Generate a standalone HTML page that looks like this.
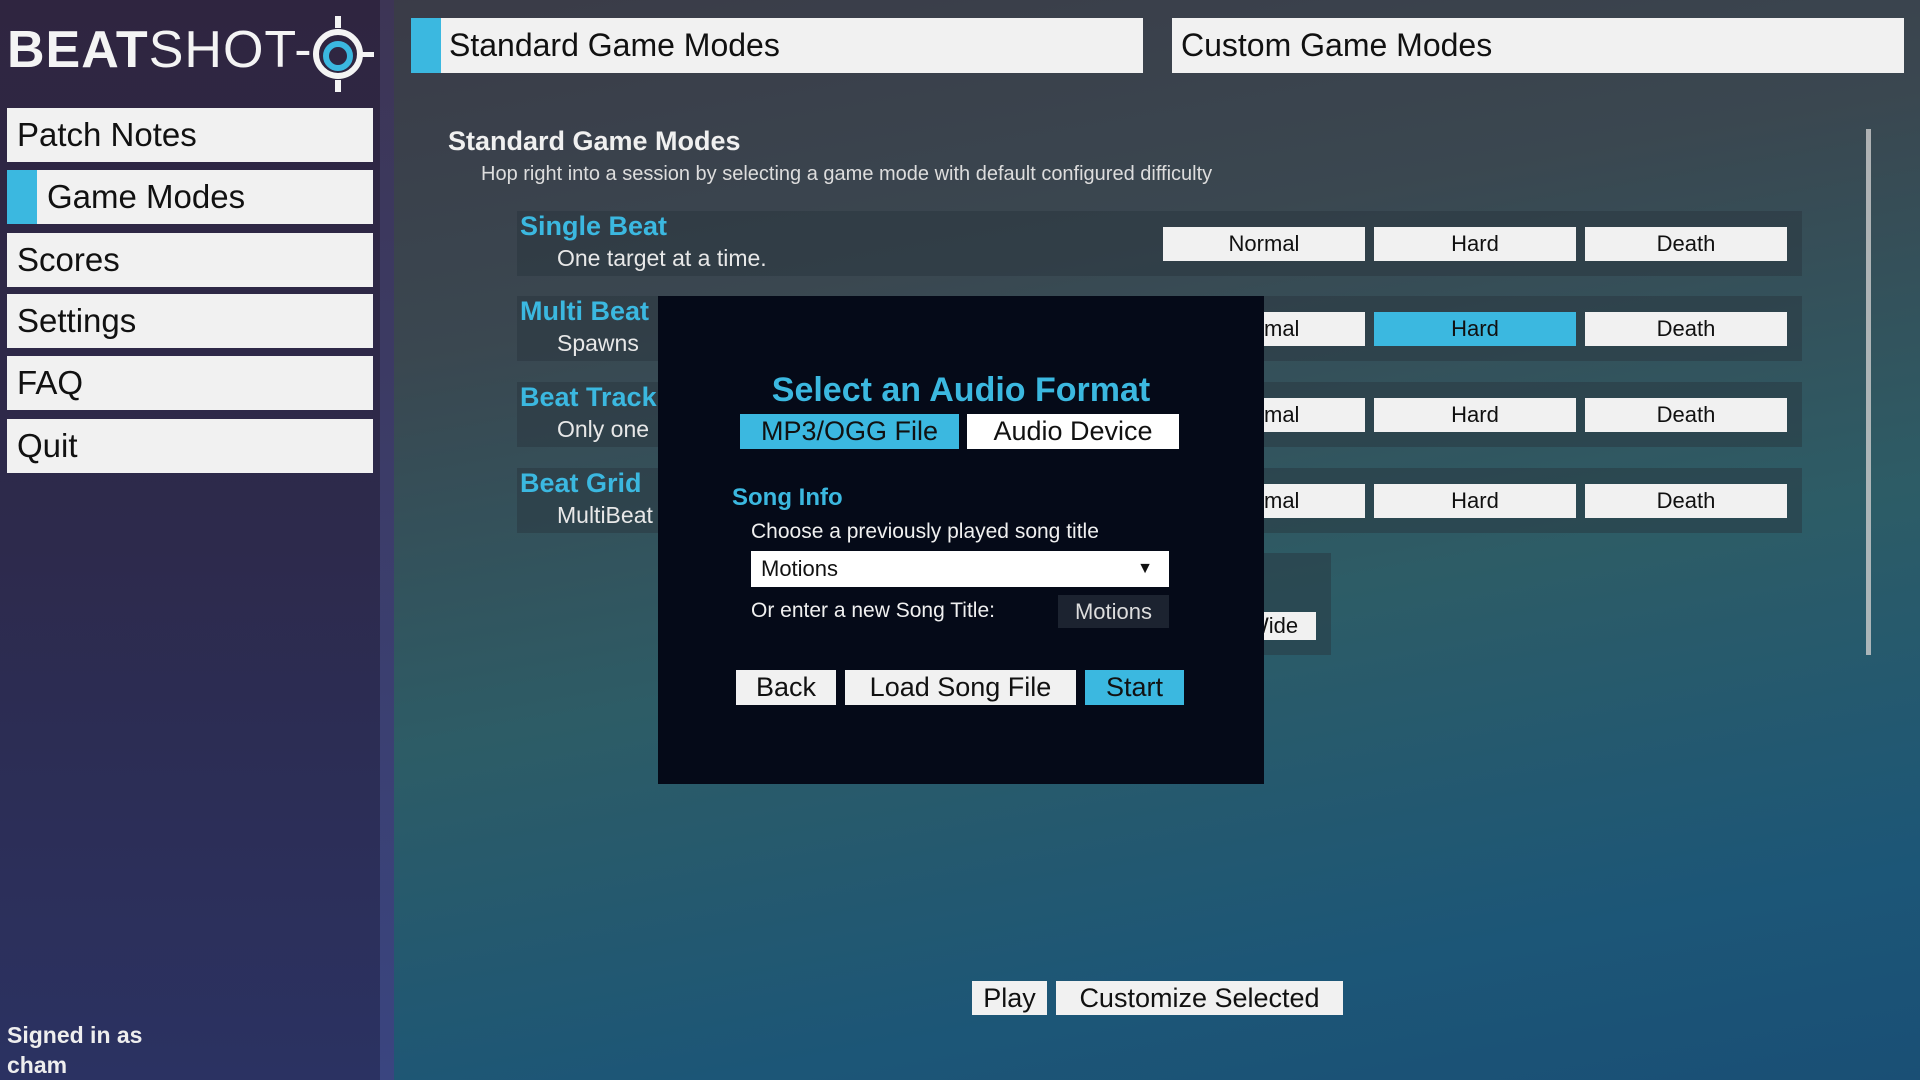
<!DOCTYPE html>
<html><head><meta charset="utf-8"><style>
*{margin:0;padding:0;box-sizing:border-box}
body{width:1920px;height:1080px;overflow:hidden;position:relative;font-family:"Liberation Sans",sans-serif;
background:linear-gradient(170deg,#3a3946 0%,#3a4750 30%,#2d5c66 58%,#1c5677 85%,#1a4f75 100%)}
.a{position:absolute}
.side{left:0;top:0;width:380px;height:1080px;background:linear-gradient(180deg,#2f2540 0%,#2d2a4c 50%,#2b3262 100%)}
.div{left:380px;top:0;width:14px;height:1080px;background:linear-gradient(180deg,#3d3555,#3a4580)}
.mb{left:7px;width:366px;height:54px;background:#f1f1f1;color:#111;font-size:33px;line-height:54px;padding-left:10px}
.tab{top:18px;height:55px;background:#f1f1f1;color:#111;font-size:32px;line-height:55px;padding-left:9px}
.row{left:517px;width:1285px;height:65px;background:rgba(40,50,60,.45)}
.tt{color:#3bb8e0;font-weight:bold;font-size:27px;left:520px}
.st{color:#e8e8e8;font-size:23px;left:557px}
.b{background:#f1f1f1;color:#111;font-size:22px;text-align:center;height:34px;line-height:34px;width:202px}
.m{left:658px;top:296px;width:606px;height:488px;background:#050a18}
.mbt{height:35px;line-height:35px;text-align:center;font-size:27px;color:#111;background:#f1f1f1}
.bl{background:#3bb8e0 !important}
</style></head><body>
<div class="a side"></div><div class="a div"></div>
<div class="a" style="left:7px;top:22px;font-size:52px;color:#f4f4f4;letter-spacing:1px;line-height:56px"><b>BEAT</b>SHOT-</div>
<svg class="a" style="left:300px;top:14px" width="80" height="80" viewBox="0 0 80 80"><circle cx="38" cy="40" r="22" fill="none" stroke="#f4f4f4" stroke-width="6"/><circle cx="38" cy="42" r="12" fill="none" stroke="#3bb8e0" stroke-width="6"/><rect x="35" y="2" width="6" height="12" fill="#f4f4f4"/><rect x="35" y="66" width="6" height="12" fill="#f4f4f4"/><rect x="62" y="38" width="12" height="5" fill="#f4f4f4"/></svg>
<div class="a mb" style="top:108px">Patch Notes</div>
<div class="a mb" style="top:170px;padding-left:40px">Game Modes</div>
<div class="a" style="left:7px;top:170px;width:30px;height:54px;background:#3bb8e0"></div>
<div class="a mb" style="top:233px">Scores</div>
<div class="a mb" style="top:294px">Settings</div>
<div class="a mb" style="top:356px">FAQ</div>
<div class="a mb" style="top:419px">Quit</div>
<div class="a" style="left:7px;top:1020px;color:#eee;font-size:23px;line-height:30px;font-weight:bold">Signed in as<br>cham</div>

<div class="a tab" style="left:411px;width:732px;padding-left:38px">Standard Game Modes</div>
<div class="a" style="left:411px;top:18px;width:30px;height:55px;background:#3bb8e0"></div>
<div class="a tab" style="left:1172px;width:732px">Custom Game Modes</div>
<div class="a" style="left:448px;top:126px;color:#f0f0f0;font-size:27px;font-weight:bold">Standard Game Modes</div>
<div class="a" style="left:481px;top:163px;color:#ddd;font-size:20px">Hop right into a session by selecting a game mode with default configured difficulty</div>
<div class="a" style="left:1866px;top:129px;width:5px;height:526px;background:#ccc;opacity:.8"></div>

<div class="a row" style="top:211px"></div><div class="a row" style="top:296px"></div><div class="a row" style="top:382px"></div><div class="a row" style="top:468px"></div>
<div class="a tt" style="top:211px">Single Beat</div><div class="a st" style="top:245px">One target at a time.</div>
<div class="a tt" style="top:296px">Multi Beat</div><div class="a st" style="top:330px">Spawns</div>
<div class="a tt" style="top:382px">Beat Track</div><div class="a st" style="top:416px">Only one</div>
<div class="a tt" style="top:468px">Beat Grid</div><div class="a st" style="top:502px">MultiBeat</div>
<div class="a b" style="left:1163px;top:227px">Normal</div><div class="a b" style="left:1374px;top:227px">Hard</div><div class="a b" style="left:1585px;top:227px">Death</div>
<div class="a b" style="left:1163px;top:312px">Normal</div><div class="a b bl" style="left:1374px;top:312px">Hard</div><div class="a b" style="left:1585px;top:312px">Death</div>
<div class="a b" style="left:1163px;top:398px">Normal</div><div class="a b" style="left:1374px;top:398px">Hard</div><div class="a b" style="left:1585px;top:398px">Death</div>
<div class="a b" style="left:1163px;top:484px">Normal</div><div class="a b" style="left:1374px;top:484px">Hard</div><div class="a b" style="left:1585px;top:484px">Death</div>
<div class="a" style="left:1230px;top:553px;width:101px;height:102px;background:rgba(40,50,60,.45)"></div>
<div class="a b" style="left:1230px;top:612px;width:86px;height:28px;line-height:28px">Wide</div>

<div class="a m"></div>
<div class="a" style="left:658px;top:371px;width:606px;text-align:center;color:#3bb8e0;font-size:34px;font-weight:bold">Select an Audio Format</div>
<div class="a mbt bl" style="left:740px;top:414px;width:219px">MP3/OGG File</div>
<div class="a mbt" style="left:967px;top:414px;width:212px;background:#fff">Audio Device</div>
<div class="a" style="left:732px;top:484px;color:#3bb8e0;font-size:24px;font-weight:bold">Song Info</div>
<div class="a" style="left:751px;top:520px;color:#f0f0f0;font-size:21px">Choose a previously played song title</div>
<div class="a" style="left:751px;top:551px;width:418px;height:36px;background:#fff;color:#111;font-size:22px;line-height:36px;padding-left:10px">Motions<span style="position:absolute;right:16px;top:0;font-size:16px">&#9660;</span></div>
<div class="a" style="left:751px;top:599px;color:#f0f0f0;font-size:21px">Or enter a new Song Title:</div>
<div class="a" style="left:1058px;top:595px;width:111px;height:33px;background:#1c2330;color:#ddd;font-size:22px;line-height:33px;text-align:center">Motions</div>
<div class="a mbt" style="left:736px;top:670px;width:100px">Back</div>
<div class="a mbt" style="left:845px;top:670px;width:231px">Load Song File</div>
<div class="a mbt bl" style="left:1085px;top:670px;width:99px">Start</div>

<div class="a mbt" style="left:972px;top:981px;width:75px;height:34px;line-height:34px">Play</div>
<div class="a mbt" style="left:1056px;top:981px;width:287px;height:34px;line-height:34px">Customize Selected</div>
</body></html>
